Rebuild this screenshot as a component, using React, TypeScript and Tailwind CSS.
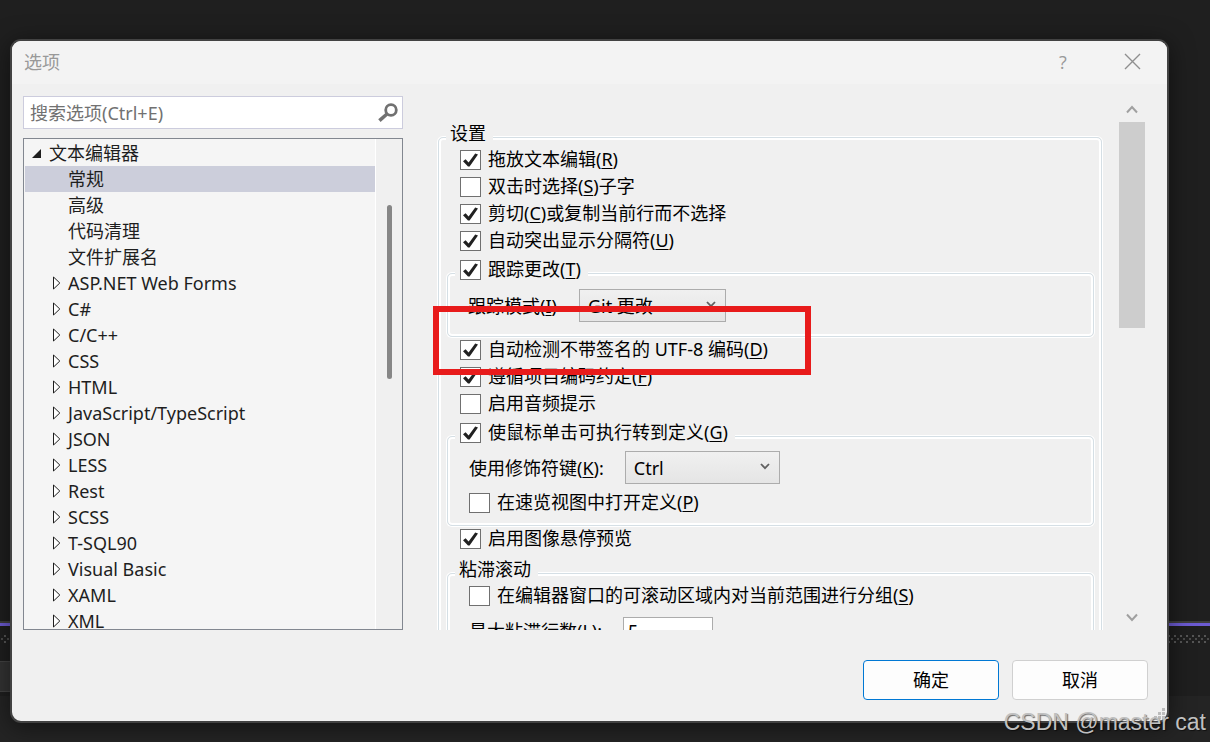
import { useState } from 'react';
import type { ReactNode } from 'react';

interface TreeNode {
  label: string;
  expandable?: boolean;
}

const treeNodes: TreeNode[] = [
  { label: '常规' },
  { label: '高级' },
  { label: '代码清理' },
  { label: '文件扩展名' },
  { label: 'ASP.NET Web Forms', expandable: true },
  { label: 'C#', expandable: true },
  { label: 'C/C++', expandable: true },
  { label: 'CSS', expandable: true },
  { label: 'HTML', expandable: true },
  { label: 'JavaScript/TypeScript', expandable: true },
  { label: 'JSON', expandable: true },
  { label: 'LESS', expandable: true },
  { label: 'Rest', expandable: true },
  { label: 'SCSS', expandable: true },
  { label: 'T-SQL90', expandable: true },
  { label: 'Visual Basic', expandable: true },
  { label: 'XAML', expandable: true },
  { label: 'XML', expandable: true },
];

function Key({ children }: { children: string }) {
  return (
    <>
      (<span className="underline decoration-1 underline-offset-2">{children}</span>)
    </>
  );
}

function Check({ checked = false, children }: { checked?: boolean; children: ReactNode }) {
  return (
    <label className="flex h-5 w-fit items-center gap-[7px] whitespace-nowrap">
      <span className="grid h-5 w-[21px] shrink-0">
        <input
          type="checkbox"
          defaultChecked={checked}
          className="peer col-start-1 row-start-1 h-5 w-[21px] appearance-none border border-[#707070] bg-white"
        />
        <svg viewBox="0 0 21 20" className="pointer-events-none invisible col-start-1 row-start-1 h-5 w-[21px] peer-checked:visible">
          <path d="M3 11.2 5.6 9.2 8.6 12.4 15.2 3.6 18 4.6 9.6 16.4 8 16.4Z" fill="#212121" />
        </svg>
      </span>
      <span className="pb-[2px]">{children}</span>
    </label>
  );
}

function Combo({ id, options, className }: { id: string; options: string[]; className: string }) {
  return (
    <span className={`grid items-center ${className}`}>
      <select
        id={id}
        className="col-start-1 row-start-1 h-[33px] w-full appearance-none border border-[#acacac] bg-linear-to-b from-[#f0f0f0] to-[#e5e5e5] px-2"
      >
        {options.map((option) => (
          <option key={option}>{option}</option>
        ))}
      </select>
      <svg viewBox="0 0 10 7" className="pointer-events-none col-start-1 row-start-1 mr-[10px] mb-[3px] h-[7px] w-[10px] justify-self-end">
        <path d="M1 1 5 5.2 9 1" fill="none" stroke="#606060" strokeWidth="1.8" />
      </svg>
    </span>
  );
}

// etched frame: blue-grey line between two white ones
function Group({ legend, children }: { legend: ReactNode; children: ReactNode }) {
  return (
    <fieldset className="min-w-0 rounded-[5px] border border-[#d5dfe5] shadow-[0_0_0_1px_#ffffff,inset_0_0_0_2px_#ffffff]">
      <legend className="ml-[7px] h-[26px] bg-[#f0f0f0] pr-[7px] pl-1 leading-[18px]">{legend}</legend>
      {children}
    </fieldset>
  );
}

function OptionTree() {
  const [selected, setSelected] = useState('常规');

  return (
    <div className="flex min-h-0 flex-1 overflow-hidden border border-[#828790] bg-[#f5f5f5] text-[#1e1e1e]">
      <ul className="min-w-0 flex-1 overflow-hidden border-r border-white pt-px pl-px">
        <li>
          <button className="flex h-[26px] w-full items-center gap-2 pl-[7px] text-left leading-[26px]">
            <svg viewBox="0 0 9 9" className="h-[9px] w-[9px]">
              <path d="M9 0V9H0Z" fill="#1e1e1e" />
            </svg>
            文本编辑器
          </button>
          <ul>
            {treeNodes.map((node) => (
              <li key={node.label}>
                <button
                  onClick={() => setSelected(node.label)}
                  className={`flex h-[26px] w-full items-center gap-[7px] pl-7 text-left leading-[26px] ${
                    node.label === selected ? 'bg-[#cccedb]' : ''
                  }`}
                >
                  <svg viewBox="0 0 8 14" className="h-[14px] w-2">
                    {node.expandable && <path d="M.5 1V13L6.8 7Z" fill="#ffffff" stroke="#1e1e1e" />}
                  </svg>
                  {node.label}
                </button>
              </li>
            ))}
          </ul>
        </li>
      </ul>
      <div className="flex w-[26px] justify-center bg-[#f0f0f0] pt-[66px]">
        <div className="h-[174px] w-[5px] rounded-full bg-[#868686]" />
      </div>
    </div>
  );
}

function SettingsPanel() {
  return (
    <div className="min-w-0 flex-1 overflow-hidden pt-7 pr-[17px] pl-[5px] text-black">
      <Group legend="设置">
        <div className="pr-[7px] pb-4 pl-2">
          <div className="flex flex-col gap-[7px] pb-[9px] pl-[13px]">
            <Check checked>拖放文本编辑<Key>R</Key></Check>
            <Check>双击时选择<Key>S</Key>子字</Check>
            <Check checked>剪切<Key>C</Key>或复制当前行而不选择</Check>
            <Check checked>自动突出显示分隔符<Key>U</Key></Check>
          </div>

          <Group legend={<div className="pl-px"><Check checked>跟踪更改<Key>T</Key></Check></div>}>
            <div className="flex items-center gap-[22px] pt-[3px] pb-[14px] pl-5">
              <label htmlFor="track-mode">跟踪模式<Key>I</Key></label>
              <Combo id="track-mode" options={['Git 更改']} className="w-[147px]" />
            </div>
          </Group>

          <div className="relative flex flex-col gap-[7px] pt-[3px] pb-[9px] pl-[13px]">
            <div className="pointer-events-none absolute -top-[31px] -left-[14px] z-10 h-[69px] w-[378px] border-6 border-[#e81b1b]" />
            <Check checked>自动检测不带签名的 UTF-8 编码<Key>D</Key></Check>
            <Check checked>遵循项目编码约定<Key>F</Key></Check>
            <Check>启用音频提示</Check>
          </div>

          <Group legend={<div className="pl-px"><Check checked>使鼠标单击可执行转到定义<Key>G</Key></Check></div>}>
            <div className="flex flex-col gap-[9px] pt-[2px] pb-[12px] pl-[21px]">
              <div className="flex items-center gap-[21px]">
                <label htmlFor="modifier-key">使用修饰符键<Key>K</Key>:</label>
                <Combo id="modifier-key" options={['Ctrl', 'Alt', 'Ctrl+Alt']} className="w-[155px]" />
              </div>
              <Check>在速览视图中打开定义<Key>P</Key></Check>
            </div>
          </Group>

          <div className="pt-[3px] pb-[11px] pl-[13px]">
            <Check checked>启用图像悬停预览</Check>
          </div>

          <Group legend="粘滞滚动">
            <div className="flex flex-col gap-[11px] pb-3 pl-[21px]">
              <Check>在编辑器窗口的可滚动区域内对当前范围进行分组<Key>S</Key></Check>
              <div className="flex items-center gap-[21px]">
                <label htmlFor="max-lines">最大粘滞行数<Key>L</Key>:</label>
                <input id="max-lines" defaultValue="5" className="h-7 w-[90px] border border-[#acacac] bg-white px-1" />
              </div>
            </div>
          </Group>
        </div>
      </Group>
    </div>
  );
}

function PanelScrollbar() {
  return (
    <div className="flex w-[26px] flex-col items-center justify-between">
      <div className="flex w-full flex-col items-center">
        <button aria-label="向上滚动" className="flex h-[26px] w-full items-center justify-center">
          <svg viewBox="0 0 12 9" className="h-[9px] w-3">
            <path d="M1 7.5 6 2 11 7.5" fill="none" stroke="#a0a0a0" strokeWidth="2" />
          </svg>
        </button>
        <div className="h-[206px] w-full bg-[#cdcdcd]" />
      </div>
      <button aria-label="向下滚动" className="flex h-[26px] w-full items-center justify-center">
        <svg viewBox="0 0 12 9" className="h-[9px] w-3">
          <path d="M1 1.5 6 7 11 1.5" fill="none" stroke="#a0a0a0" strokeWidth="2" />
        </svg>
      </button>
    </div>
  );
}

// the editor window that shows around the dialog
function Backdrop() {
  return (
    <div className="absolute inset-x-0 bottom-0 flex flex-col">
      <div className="h-[2px] bg-[#3d3d3d]" />
      <div className="h-[3px] bg-[#6c5bd2]" />
      <div className="h-[9px]" />
      <svg className="h-2 w-full">
        <defs>
          <pattern id="grip-dots" width="6" height="6" patternUnits="userSpaceOnUse">
            <rect x="4" y="0" width="2" height="2" fill="#555555" />
            <rect x="1" y="3" width="2" height="2" fill="#4a4a4a" />
          </pattern>
        </defs>
        <rect width="100%" height="100%" fill="url(#grip-dots)" />
      </svg>
      <div className="mt-[18px] h-[31px] w-3 border-y border-[#434343] bg-[#333333]" />
      <div className="mt-[4px] h-[46px] bg-[#242424]" />
    </div>
  );
}

export default function App() {
  return (
    <div className="relative flex h-screen min-h-[500px] flex-col overflow-hidden bg-[#1f1f1f] pt-[39px] pr-[41px] pb-[19px] pl-[10px] font-['Noto_Sans','Noto_Sans_CJK_SC',sans-serif] text-[18px] leading-5">
      <Backdrop />

      <div role="dialog" aria-labelledby="dialog-title" className="relative flex min-h-0 flex-1 flex-col rounded-[11px] border-2 border-[#424242] bg-[#f0f0f0] shadow-[0_4px_24px_#00000080]">
        <header className="flex h-[43px] shrink-0 items-center justify-between rounded-t-[9px] bg-[#f3f3f3] pr-[26px] pb-[2px] pl-3 text-[#999999]">
          <h1 id="dialog-title">选项</h1>
          <div className="flex items-center gap-14">
            <button aria-label="帮助" className="w-[10px] font-['Open_Sans',sans-serif]">?</button>
            <button aria-label="关闭">
              <svg viewBox="0 0 17 17" className="h-[17px] w-[17px]">
                <path d="M1 1 16 16M16 1 1 16" stroke="#8f8f8f" strokeWidth="1.4" />
              </svg>
            </button>
          </div>
        </header>

        <div className="flex min-h-0 flex-1 gap-[30px] pt-3 pl-[11px]">
          <div className="flex w-[380px] shrink-0 flex-col gap-[9px]">
            <div className="flex h-[33px] shrink-0 items-center border border-[#ccccdd] bg-white pr-1 pl-[6px]">
              <input
                type="text"
                aria-label="搜索选项"
                placeholder="搜索选项(Ctrl+E)"
                className="min-w-0 flex-1 outline-none placeholder:text-[#717171]"
              />
              <svg viewBox="0 0 20 20" className="h-5 w-5">
                <circle cx="13" cy="7" r="5.3" fill="none" stroke="#717171" strokeWidth="2.8" />
                <path d="M9 11 1.4 17.6" stroke="#717171" strokeWidth="3.6" />
              </svg>
            </div>
            <OptionTree />
          </div>
          <div className="flex min-w-0 flex-1 pr-[22px]">
            <SettingsPanel />
            <PanelScrollbar />
          </div>
        </div>

        <footer className="flex shrink-0 justify-end gap-[13px] pt-[30px] pr-[19px] pb-[21px] text-black">
          <button className="h-10 w-[136px] rounded-[4px] border border-[#0078d4] bg-[#fdfdfd]">确定</button>
          <button className="h-10 w-[136px] rounded-[4px] border border-[#d0d0d0] bg-[#fdfdfd]">取消</button>
        </footer>

        <svg viewBox="0 0 12 12" className="absolute right-[2px] bottom-[1px] h-3 w-3">
          <path d="M9 0h3v3H9zM5 4h3v3H5zM9 4h3v3H9zM1 8h3v3H1zM5 8h3v3H5zM9 8h3v3H9z" fill="#bcbcbc" />
        </svg>
      </div>

      <div className="absolute right-1 bottom-1 z-20 font-['Liberation_Sans',sans-serif] text-[23px] leading-8 text-[#c0c0c0] [text-shadow:1px_1px_1px_#00000090]">
        CSDN @master cat
      </div>
    </div>
  );
}
